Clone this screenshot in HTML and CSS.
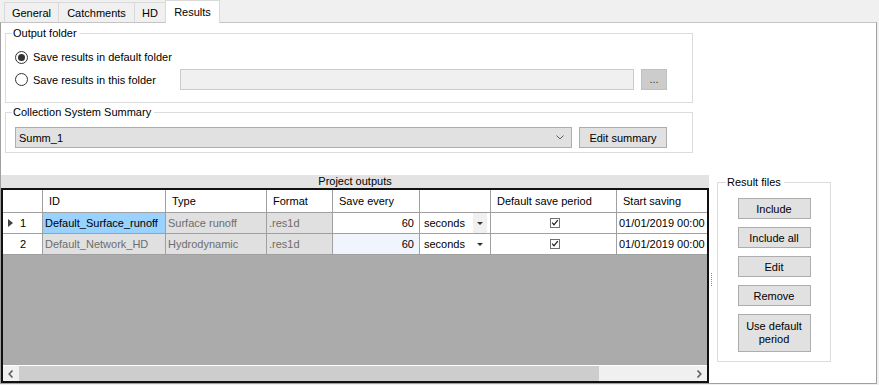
FILE: index.html
```html
<!DOCTYPE html>
<html lang="en">
<head>
<meta charset="UTF-8">
<meta name="viewport" content="width=device-width, initial-scale=1.0">
<title>Results</title>
<link rel="stylesheet" href="styles.css">
</head>
<body>
<div class="tabs">
  <div class="tab tab-general">General</div>
  <div class="tab tab-catchments">Catchments</div>
  <div class="tab tab-hd">HD</div>
  <div class="tab tab-results active">Results</div>
</div>

<div class="page">
  <!-- Output folder -->
  <fieldset class="group group-output">
    <legend>Output folder</legend>
    <div class="option-row">
      <div class="option"><span class="radio checked"></span>Save results in default folder</div>
    </div>
    <div class="option-row option-row-field">
      <div class="option"><span class="radio"></span>Save results in this folder</div>
      <div class="textbox"></div>
      <div class="btn btn-browse">...</div>
    </div>
  </fieldset>

  <!-- Collection System Summary -->
  <fieldset class="group group-summary">
    <legend>Collection System Summary</legend>
    <div class="combo-row">
      <div class="combo">
        <span>Summ_1</span>
        <svg class="chevron" width="8" height="5" viewBox="0 0 8 5"><path d="M0.5 0.5 L4 4 L7.5 0.5" fill="none" stroke="#606060" stroke-width="1"/></svg>
      </div>
      <div class="btn btn-edit">Edit summary</div>
    </div>
  </fieldset>

  <div class="outputs-area">
    <div class="outputs">
      <div class="outputs-title">Project outputs</div>
      <div class="grid">
        <div class="grid-head">
          <div class="cell"></div>
          <div class="cell">ID</div>
          <div class="cell">Type</div>
          <div class="cell">Format</div>
          <div class="cell">Save every</div>
          <div class="cell"></div>
          <div class="cell">Default save period</div>
          <div class="cell">Start saving</div>
        </div>
        <div class="grid-row">
          <div class="cell row-head"><span class="marker"><span class="arrow-right"></span></span>1</div>
          <div class="cell selected">Default_Surface_runoff</div>
          <div class="cell readonly">Surface runoff</div>
          <div class="cell readonly">.res1d</div>
          <div class="cell number">60</div>
          <div class="cell unit">seconds<span class="drop drop-shaded"><span class="arrow-down"></span></span></div>
          <div class="cell check">
            <svg width="10" height="10" viewBox="0 0 10 10"><rect x="0.5" y="0.5" width="9" height="9" fill="#fff" stroke="#707070"/><path d="M2.2 4.6 L4 6.8 L7.8 2.2" fill="none" stroke="#1e1e1e" stroke-width="1.3"/></svg>
          </div>
          <div class="cell">01/01/2019 00:00</div>
        </div>
        <div class="grid-row">
          <div class="cell row-head"><span class="marker"></span>2</div>
          <div class="cell readonly">Default_Network_HD</div>
          <div class="cell readonly">Hydrodynamic</div>
          <div class="cell readonly">.res1d</div>
          <div class="cell number tinted">60</div>
          <div class="cell unit">seconds<span class="drop"><span class="arrow-down"></span></span></div>
          <div class="cell check">
            <svg width="10" height="10" viewBox="0 0 10 10"><rect x="0.5" y="0.5" width="9" height="9" fill="#fff" stroke="#707070"/><path d="M2.2 4.6 L4 6.8 L7.8 2.2" fill="none" stroke="#1e1e1e" stroke-width="1.3"/></svg>
          </div>
          <div class="cell">01/01/2019 00:00</div>
        </div>
        <div class="grid-empty"></div>
        <div class="hscroll">
          <div class="scroll-btn">
            <svg width="6" height="8" viewBox="0 0 6 8"><path d="M4.5 0.5 L1.2 4 L4.5 7.5" fill="none" stroke="#606060" stroke-width="1.6"/></svg>
          </div>
          <div class="scroll-thumb"></div>
          <div class="scroll-track"></div>
          <div class="scroll-btn">
            <svg width="6" height="8" viewBox="0 0 6 8"><path d="M1.5 0.5 L4.8 4 L1.5 7.5" fill="none" stroke="#606060" stroke-width="1.6"/></svg>
          </div>
        </div>
      </div>
    </div>

    <div class="splitter"><div class="splitter-dots"></div></div>

    <!-- Result files -->
    <fieldset class="group group-files">
      <legend>Result files</legend>
      <div class="file-buttons">
        <div class="btn btn-file">Include</div>
        <div class="btn btn-file">Include all</div>
        <div class="btn btn-file">Edit</div>
        <div class="btn btn-file">Remove</div>
        <div class="btn btn-file btn-tall">Use default<br>period</div>
      </div>
    </fieldset>
  </div>
</div>
</body>
</html>
```

FILE: styles.css
```css
* { box-sizing: border-box; }
body {
  margin: 0;
  background-color: #f0f0f0;
  font-family: "Liberation Sans", Arial, sans-serif;
  font-size: 11px;
  color: #000;
  width: 879px;
  height: 385px;
  overflow: hidden;
}

/* tab strip */
.tabs {
  display: flex;
  align-items: flex-end;
  height: 22px;
  padding-left: 4px;
}
.tab {
  height: 20px;
  padding-top: 2px;
  line-height: 17px;
  text-align: center;
  background-color: #f0f0f0;
  border: 1px solid #d9d9d9;
  border-bottom: none;
  margin-right: -1px;
}
.tab-general { width: 55px; }
.tab-catchments { width: 77px; }
.tab-hd { width: 32px; }
.tab-results { width: 55px; }
.tab.active {
  position: relative;
  z-index: 1;
  height: 23px;
  margin-bottom: -1px;
  padding-top: 3px;
  background-color: #fff;
}

.page {
  width: 877px;
  background-color: #fff;
  border: 1px solid #a0a0a0;
  border-top-color: #c4c4c4;
  padding-top: 3px;
}

/* group boxes */
.group {
  margin: 0 0 0 4px;
  width: 688px;
  min-width: 0;
  border: 1px solid #dcdcdc;
  padding: 9px 8px 12px 9px;
}
.group legend {
  padding: 0 3px 0 1px;
  margin-left: -3px;
  line-height: 14px;
}
.group-summary {
  margin-top: 2px;
  padding: 8px 8px 4px 9px;
}

.option-row {
  display: flex;
  align-items: center;
  height: 16px;
}
.option-row-field {
  margin-top: 4px;
  height: 21px;
}
.option {
  display: flex;
  align-items: center;
  width: 165px;
  white-space: nowrap;
}
.radio {
  width: 13px;
  height: 13px;
  margin-right: 5px;
  border: 1px solid #333;
  border-radius: 50%;
  background-color: #fff;
  display: flex;
  align-items: center;
  justify-content: center;
  flex-shrink: 0;
}
.radio.checked::after {
  content: "";
  width: 7px;
  height: 7px;
  border-radius: 50%;
  background-color: #333;
}
.textbox {
  width: 454px;
  height: 21px;
  background-color: #f0f0f0;
  border: 1px solid #cccccc;
}

.btn {
  height: 21px;
  background-color: #e1e1e1;
  border: 1px solid #adadad;
  display: flex;
  align-items: center;
  justify-content: center;
  text-align: center;
}
.btn-browse {
  width: 26px;
  margin-left: 7px;
  background-color: #cccccc;
  border-color: #bfbfbf;
  color: #333;
  padding-bottom: 2px;
}

.combo-row { display: flex; }
.combo {
  width: 557px;
  height: 21px;
  padding: 0 7px 0 3px;
  background-color: #e1e1e1;
  border: 1px solid #adadad;
  display: flex;
  align-items: center;
  justify-content: space-between;
}
.btn-edit {
  width: 88px;
  margin-left: 7px;
}

/* outputs + result files */
.outputs-area {
  display: flex;
  align-items: flex-start;
  margin-top: 22px;
}
.outputs { width: 708px; }
.outputs-title {
  height: 13px;
  line-height: 13px;
  text-align: center;
  background-color: #e3e3e3;
}
.grid {
  height: 195px;
  border: 2px solid #111;
  display: flex;
  flex-direction: column;
  overflow: hidden;
  background-color: #ababab;
}
.grid-head,
.grid-row {
  display: grid;
  grid-template-columns: 40px 123px 101px 66px 87px 71px 126px 120px;
  flex-shrink: 0;
}
.cell {
  border-right: 1px solid #a0a0a0;
  border-bottom: 1px solid #a0a0a0;
  background-color: #fff;
  white-space: nowrap;
  overflow: hidden;
}
.grid-head .cell {
  height: 23px;
  padding: 1px 0 0 6px;
  line-height: 21px;
}
.grid-row .cell {
  height: 21px;
  padding-left: 2px;
  line-height: 20px;
}
.grid-row .row-head {
  display: flex;
  align-items: center;
  padding-left: 5px;
}
.marker {
  width: 12px;
  display: flex;
  align-items: center;
}
.arrow-right {
  width: 0;
  height: 0;
  border-left: 5px solid #404040;
  border-top: 4px solid transparent;
  border-bottom: 4px solid transparent;
}
.grid-row .selected { background-color: #99d1ff; }
.grid-row .readonly {
  background-color: #e0e0e0;
  color: #6d6d6d;
}
.grid-row .number {
  text-align: right;
  padding-right: 5px;
}
.grid-row .tinted { background-color: #eff4fd; }
.grid-row .unit {
  display: flex;
  justify-content: space-between;
  padding-left: 4px;
}
.drop {
  width: 14px;
  margin-right: 3px;
  display: flex;
  align-items: center;
  justify-content: center;
}
.drop-shaded { background-color: #f0f0f0; }
.arrow-down {
  width: 0;
  height: 0;
  border-top: 3px solid #333;
  border-left: 3px solid transparent;
  border-right: 3px solid transparent;
}
.grid-row .check {
  display: flex;
  align-items: center;
  justify-content: center;
}
.grid-empty { flex: 1; }
.hscroll {
  height: 16px;
  border-top: 1px solid #fff;
  background-color: #f0f0f0;
  display: flex;
  flex-shrink: 0;
}
.scroll-btn {
  width: 16px;
  display: flex;
  align-items: center;
  justify-content: center;
}
.scroll-thumb {
  width: 580px;
  background-color: #cdcdcd;
}
.scroll-track { flex: 1; }

.splitter {
  width: 8px;
  align-self: center;
}
.splitter-dots {
  margin-left: 2px;
  width: 1px;
  height: 13px;
  border-left: 1px dotted #8c8c8c;
}

.group-files {
  width: 114px;
  margin: 0;
  padding: 8px 0 9px 0;
}
.group-files legend {
  line-height: 15px;
  margin-left: 8px;
}
.file-buttons {
  display: flex;
  flex-direction: column;
  align-items: center;
  gap: 8px;
}
.btn-file { width: 73px; }
.btn-tall {
  height: 38px;
  line-height: 13px;
}
```
